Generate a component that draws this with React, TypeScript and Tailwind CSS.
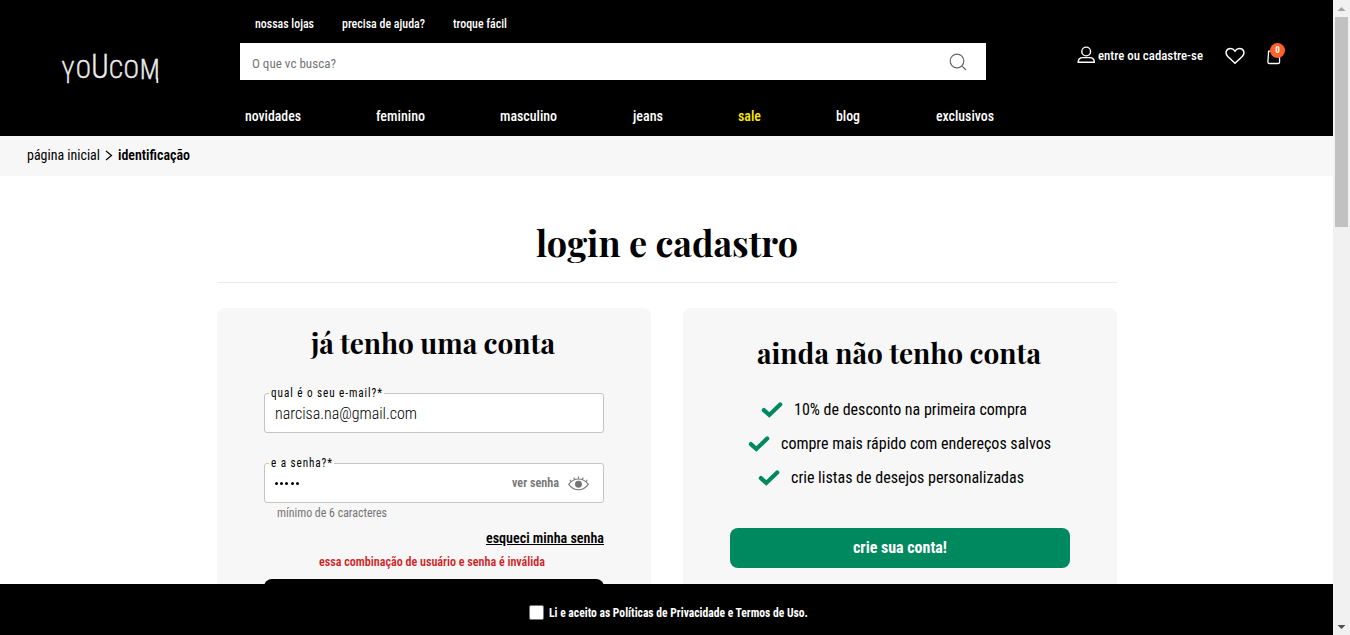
import { useLayoutEffect, useRef, useState, type ReactNode } from "react";

/** Single line of text, condensed horizontally to fill the width set in its class list. */
function Fit({ className = "", children }: { className?: string; children: ReactNode }) {
  const outer = useRef<HTMLSpanElement>(null);
  const inner = useRef<HTMLSpanElement>(null);
  const [scale, setScale] = useState(1);
  useLayoutEffect(() => {
    if (outer.current && inner.current) {
      setScale(outer.current.offsetWidth / inner.current.getBoundingClientRect().width);
    }
  }, []);
  return (
    <span ref={outer} className={`block shrink-0 whitespace-nowrap ${className}`}>
      <span ref={inner} className="inline-block origin-left" style={{ transform: `scaleX(${scale})` }}>
        {children}
      </span>
    </span>
  );
}

const topLinks = [
  { label: "nossas lojas", width: "w-[59px]" },
  { label: "precisa de ajuda?", width: "w-[83px]" },
  { label: "troque fácil", width: "w-[54px]" },
];

const menu = [
  { label: "novidades", style: "w-[56px]" },
  { label: "feminino", style: "w-[49px]" },
  { label: "masculino", style: "w-[57px]" },
  { label: "jeans", style: "w-[30px]" },
  { label: "sale", style: "w-[23px] text-[#ffea00]" },
  { label: "blog", style: "w-[24px]" },
  { label: "exclusivos", style: "w-[58px]" },
];

const perks = [
  { label: "10% de desconto na primeira compra", width: "w-[233px]", row: "pl-[78px]" },
  { label: "compre mais rápido com endereços salvos", width: "w-[270px]", row: "pl-[65px]" },
  { label: "crie listas de desejos personalizadas", width: "w-[233px]", row: "pl-[75px]" },
];

function Logo() {
  return (
    <svg className="ml-[60px] mt-[38px] h-[60px] w-[104px] fill-[#eee] stroke-[#eee] font-['Roboto_Condensed',Roboto,sans-serif] font-light" viewBox="0 -10 104 60" strokeWidth=".4">
      <text x="1.500" y="35" fontSize="32" textLength="13" lengthAdjust="spacingAndGlyphs">Y</text>
      <text x="15.700" y="30" fontSize="26.500" textLength="15.200" lengthAdjust="spacingAndGlyphs">O</text>
      <text x="31.200" y="30" fontSize="33" textLength="17.400" lengthAdjust="spacingAndGlyphs">U</text>
      <text x="48.800" y="30" fontSize="26.500" textLength="14.500" lengthAdjust="spacingAndGlyphs">C</text>
      <text x="63.600" y="30" fontSize="26.500" textLength="15.500" lengthAdjust="spacingAndGlyphs">O</text>
      <text x="79.800" y="31" fontSize="27" textLength="20" lengthAdjust="spacingAndGlyphs">M</text>
      <path d="M97.300 30v5" strokeWidth="1.800" />
    </svg>
  );
}

function Header() {
  return (
    <header className="flex h-[136px] shrink-0 bg-black text-white">
      <div className="w-60 shrink-0">
        <Logo />
      </div>
      <div className="w-[760px] shrink-0">
        <nav className="flex h-[43px] gap-7 pl-[15px] pt-[14px] text-[12.5px] font-medium leading-5">
          {topLinks.map((l) => (
            <Fit key={l.label} className={l.width}>{l.label}</Fit>
          ))}
        </nav>
        <div className="flex h-[37px] w-[746px] items-center justify-between bg-white pl-3 pr-[19px] text-[#757575]">
          <Fit className="mt-[4px] w-[84px] text-[13px] leading-5">O que vc busca?</Fit>
          <svg className="size-[18px] fill-none stroke-[#666]" viewBox="0 0 18 18" strokeWidth="1.2">
            <circle cx="8" cy="8" r="6.8" />
            <path d="M12.8 12.8 17 17" />
          </svg>
        </div>
        <nav className="flex gap-[75.4px] pl-[4.5px] pt-[26px] text-[15px] font-medium leading-5">
          {menu.map((m) => (
            <Fit key={m.label} className={m.style}>{m.label}</Fit>
          ))}
        </nav>
      </div>
      <div className="flex pl-[77px] pt-[46px]">
        <svg className="h-[18px] w-[19px] fill-none stroke-white" viewBox="0 0 19 18" strokeWidth="1.400">
          <circle cx="9.2" cy="5.5" r="4.4" />
          <path d="M1.2 16.3c0-3.1 2.2-4.7 4.8-4.7h6.4c2.700 0 4.900 1.600 4.900 4.700z" />
        </svg>
        <Fit className="ml-[2px] w-[105px] text-[13px] font-medium leading-5">entre ou cadastre-se</Fit>
        <svg className="ml-[22px] size-5 fill-none stroke-white" viewBox="0 0 20 20" strokeWidth="1.5">
          <path d="M10 17.3 2.800 10.500C-.5 7 1.300 2.600 5.500 2.600c2 0 3.500 1 4.500 2.500 1-1.500 2.500-2.500 4.500-2.500 4.200 0 6 4.400 2.700 7.900z" />
        </svg>
        <div className="relative ml-[22px] h-5 w-5">
          <svg className="h-5 w-[14px] fill-none stroke-white" viewBox="0 0 14 20" strokeWidth="1.3">
            <path d="M1.600 5.200h10.700l.3 10.700q0 1.600-1.600 1.600H2.500q-1.600 0-1.600-1.600z" />
          </svg>
          <span className="absolute -top-[3px] left-[3px] flex size-[15px] items-center justify-center rounded-full bg-[#ff6229] text-[9px] font-bold">0</span>
        </div>
      </div>
    </header>
  );
}

function Field({ label, labelWidth, children }: { label: string; labelWidth: string; children: ReactNode }) {
  return (
    <div className="relative flex h-10 w-[340px] items-center rounded-[3px] border border-[#c4c4c4] bg-white pl-[10px]">
      <div className="absolute -top-[9px] left-[4px] bg-[linear-gradient(#f7f7f7_50%,#fff_50%)] pl-[2px] pr-px text-[12px] leading-4 tracking-[1px]">
        <Fit className={labelWidth}>{label}</Fit>
      </div>
      {children}
    </div>
  );
}

function Eye() {
  return (
    <svg className="ml-[9.5px] h-[15px] w-[21px] fill-none stroke-[#757575]" viewBox="0 0 21 15" strokeWidth="1.100">
      <path d="M.7 8.300C3.500 4.700 6.800 3 10.500 3s7 1.700 9.800 5.300c-2.800 3.700-6.100 5.500-9.800 5.500S3.500 12 .7 8.300zM3 5.500 1.800 3.700M6.500 3.700 5.800 1.500M10.500 3V.5M14.500 3.700l.7-2.200M18 5.500l1.200-1.800" />
      <circle cx="10.500" cy="8.200" r="2.900" className="fill-[#757575]" />
    </svg>
  );
}

function Login() {
  return (
    <section className="flex w-[434px] flex-col rounded-t-lg bg-[#f7f7f7] px-[47px] pt-[15px] [&>*]:shrink-0">
      <Fit className="ml-[47px] w-[244px] font-['Playfair_Display','Liberation_Serif',serif] text-[28px] font-bold leading-10">já tenho uma conta</Fit>
      <div className="mt-[30px]">
        <Field label="qual é o seu e-mail?*" labelWidth="w-[112px]">
          <Fit className="mt-px w-[142px] text-[16px] font-light leading-5">narcisa.na@gmail.com</Fit>
        </Field>
      </div>
      <div className="mt-[30px]">
        <Field label="e a senha?*" labelWidth="w-[62px]">
          <div className="flex flex-1 gap-[2.2px] pt-px">
            {[0, 1, 2, 3, 4].map((i) => (
              <i key={i} className="size-[3.2px] rounded-full bg-black" />
            ))}
          </div>
          <Fit className="w-[47px] text-[12px] font-semibold leading-5 text-[#757575]">ver senha</Fit>
          <Eye />
          <div className="w-[13.5px]" />
        </Field>
      </div>
      <Fit className="ml-[13px] w-[110px] text-[12px] leading-5 text-[#757575]">mínimo de 6 caracteres</Fit>
      <div className="mt-[5px] flex justify-end">
        <Fit className="w-[118px] text-[14px] font-semibold leading-5"><span className="underline">esqueci minha senha</span></Fit>
      </div>
      <Fit className="ml-[55px] mt-[4px] w-[226px] text-[12px] font-semibold leading-5 text-[#d21f26]">essa combinação de usuário e senha é inválida</Fit>
      <div className="mt-[7px] h-12 rounded-lg bg-black" />
    </section>
  );
}

function Check() {
  return (
    <svg className="h-4 w-[22px] fill-none stroke-[#00885e]" viewBox="0 0 22 16" strokeWidth="4.200" strokeLinecap="round">
      <path d="m2.900 8.100 5.400 4.900L19.200 2.500" />
    </svg>
  );
}

function SignUp() {
  return (
    <section className="flex w-[434px] flex-col rounded-t-lg bg-[#f7f7f7] pt-[25px] [&>*]:shrink-0">
      <Fit className="ml-[74.5px] w-[284px] font-['Playfair_Display','Liberation_Serif',serif] text-[28px] font-bold leading-10">ainda não tenho conta</Fit>
      <ul className="flex flex-col gap-[10px] pt-[25px]">
        {perks.map((p) => (
          <li key={p.label} className={`flex h-6 items-center gap-[11px] ${p.row}`}>
            <Check />
            <Fit className={`text-[16px] leading-6 ${p.width}`}>{p.label}</Fit>
          </li>
        ))}
      </ul>
      <button className="mx-auto mt-[38px] flex h-10 w-[340px] items-center justify-center rounded-lg bg-[#00885e] text-white">
        <Fit className="w-[94px] text-[16px] font-bold leading-6">crie sua conta!</Fit>
      </button>
    </section>
  );
}

function Scrollbar() {
  return (
    <div className="flex w-[17px] shrink-0 flex-col items-center bg-[#f1f1f1]">
      <svg className="h-[17px] w-[17px] fill-[#a3a3a3]" viewBox="0 0 17 17"><path d="m8.500 7 4 4h-8z" /></svg>
      <div className="h-[210px] w-[13px] bg-[#c1c1c1]" />
      <svg className="mt-auto h-[17px] w-[17px] fill-[#505050]" viewBox="0 0 17 17"><path d="m8.500 11 4-4h-8z" /></svg>
    </div>
  );
}

export default function App() {
  return (
    <div className="flex h-[635px] w-[1350px] overflow-hidden bg-white font-['Roboto_Condensed',Roboto,sans-serif] text-black">
      <div className="flex w-[1333px] shrink-0 flex-col">
        <Header />
        <div className="flex h-10 shrink-0 bg-[#f7f7f7] pl-[27px] pt-[9px] text-[14px] leading-5">
          <Fit className="w-[73px]">página inicial</Fit>
          <svg className="ml-[5px] mt-[5px] h-[11px] w-[8px] fill-none stroke-black" viewBox="0 0 8 11" strokeWidth="1.200"><path d="m1 1 5.500 4.500L1 10" /></svg>
          <Fit className="ml-[4.500px] w-[72px] font-semibold">identificação</Fit>
        </div>
        <main className="flex min-h-0 flex-1 flex-col items-center overflow-hidden">
          <div className="flex h-[107px] w-[900px] shrink-0 justify-center border-b border-[#ebebeb] pt-[41px]">
            <Fit className="w-[262px] font-['Playfair_Display','Liberation_Serif',serif] text-[36px] font-bold leading-[50px]">login e cadastro</Fit>
          </div>
          <div className="mt-[25px] flex min-h-0 flex-1 gap-8">
            <Login />
            <SignUp />
          </div>
        </main>
        <footer className="flex h-[51px] shrink-0 items-center bg-black pl-[529px] pt-[6px] text-white">
          <span className="size-[15px] rounded-[2px] border border-[#767676] bg-white" />
          <Fit className="ml-[5px] w-[259px] text-[13px] font-bold leading-5">Li e aceito as Políticas de Privacidade e Termos de Uso.</Fit>
        </footer>
      </div>
      <Scrollbar />
    </div>
  );
}
